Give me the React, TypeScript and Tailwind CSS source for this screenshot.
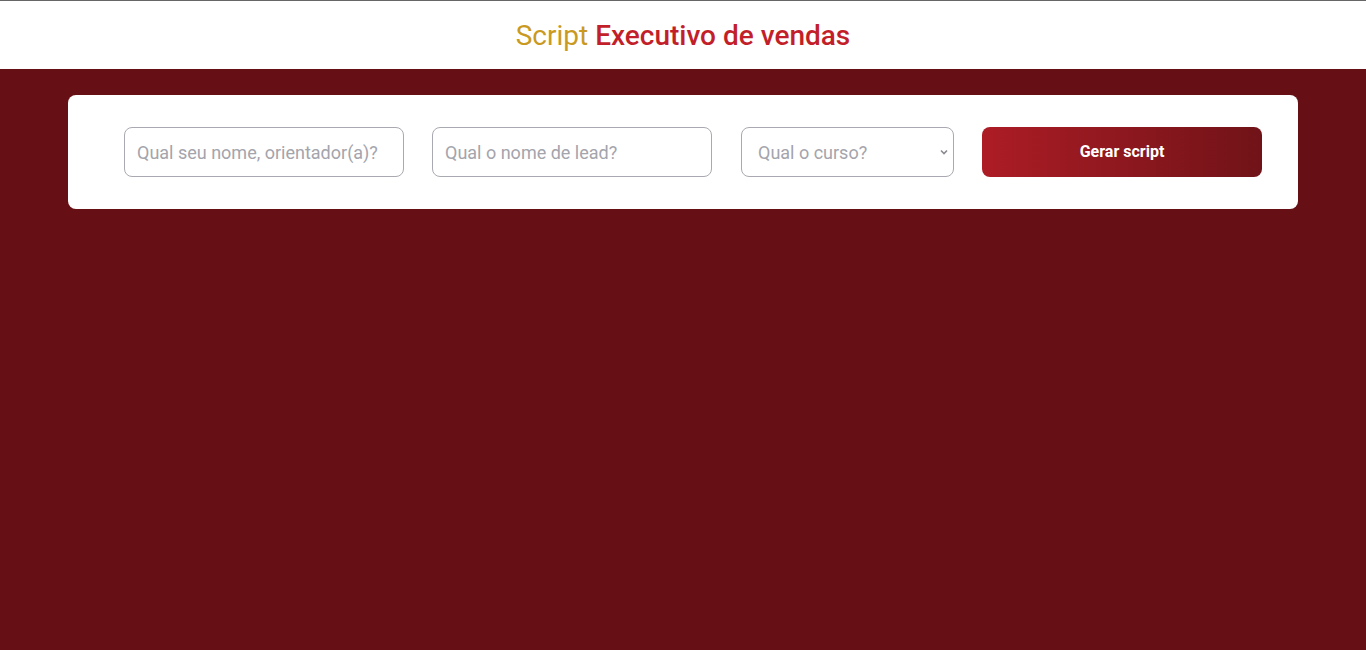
export default function App() {
  return (
    <div className="min-h-[650px] bg-[#661016] font-['Roboto',sans-serif]">
      <header className="flex h-[69px] items-center justify-center border-t border-[#666] bg-white">
        <h1 className="pt-px text-[28px] leading-none">
          <span className="text-[#c99a1f]">Script</span>{" "}
          <span className="font-medium text-[#c21f2a]">Executivo de vendas</span>
        </h1>
      </header>

      <main className="px-[68px] pt-[26px]">
        <div className="flex items-center gap-7 rounded-lg bg-white px-14 py-8">
          <input
            type="text"
            placeholder="Qual seu nome, orientador(a)?"
            className="h-[50px] w-[280px] shrink-0 rounded-lg border border-[#a9a9b1] px-3 text-[18px] text-gray-700 placeholder:text-[#a4a4ac] focus:outline-none"
          />
          <input
            type="text"
            placeholder="Qual o nome de lead?"
            className="h-[50px] w-[280px] shrink-0 rounded-lg border border-[#a9a9b1] px-3 text-[18px] text-gray-700 placeholder:text-[#a4a4ac] focus:outline-none"
          />
          <div className="relative ml-px shrink-0">
            <select
              defaultValue=""
              className="h-[50px] w-[213px] appearance-none rounded-lg border border-[#a9a9b1] bg-white px-4 text-[18px] text-[#a4a4ac] focus:outline-none"
            >
              <option value="" disabled>
                Qual o curso?
              </option>
            </select>
            <svg
              className="pointer-events-none absolute right-[5px] top-1/2 -translate-y-1/2"
              width="10"
              height="10"
              viewBox="0 0 10 10"
              fill="none"
              stroke="#8a8a92"
              strokeWidth="1.6"
            >
              <path d="M2 3.5 5 6.5 8 3.5" />
            </svg>
          </div>
          <button className="h-[50px] w-[280px] shrink-0 rounded-lg bg-gradient-to-r from-[#ad1c25] to-[#701318] text-[16px] font-bold text-white">
            Gerar script
          </button>
        </div>
      </main>
    </div>
  );
}
